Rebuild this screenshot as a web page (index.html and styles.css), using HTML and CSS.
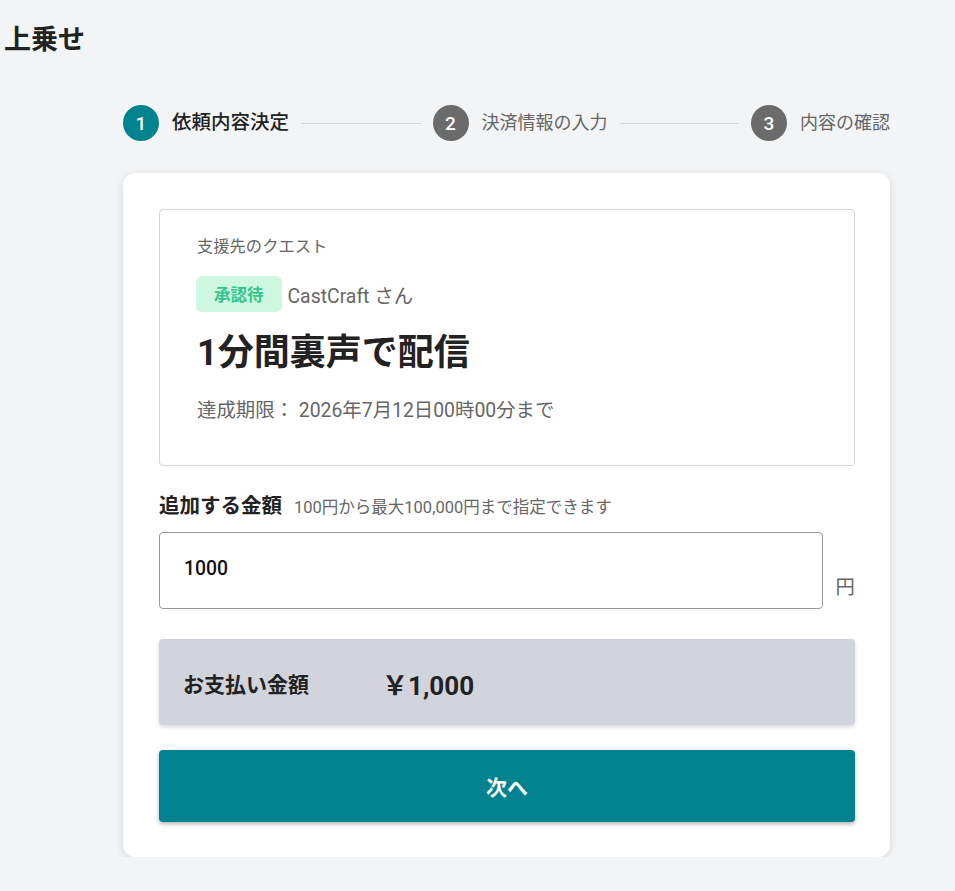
FILE: index.html
```html
<!DOCTYPE html>
<html lang="ja">
<head>
<meta charset="utf-8">
<title>上乗せ</title>
<link rel="stylesheet" href="styles.css">
</head>
<body>
<div class="page">
  <h1 class="page-title">上乗せ</h1>
  <div class="main">
    <ol class="stepper">
      <li class="step step-active"><span class="step-num">1</span><span class="step-label">依頼内容決定</span></li>
      <li class="step-line"></li>
      <li class="step"><span class="step-num">2</span><span class="step-label">決済情報の入力</span></li>
      <li class="step-line"></li>
      <li class="step"><span class="step-num">3</span><span class="step-label">内容の確認</span></li>
    </ol>

    <section class="card">
      <div class="quest">
        <div class="quest-caption">支援先のクエスト</div>
        <div class="quest-meta">
          <span class="badge">承認待</span>
          <span class="quest-owner">CastCraft さん</span>
        </div>
        <h2 class="quest-title">1分間裏声で配信</h2>
        <div class="quest-deadline">達成期限： 2026年7月12日00時00分まで</div>
      </div>

      <div class="amount-label">
        <span class="amount-title">追加する金額</span>
        <span class="amount-hint">100円から最大100,000円まで指定できます</span>
      </div>
      <div class="amount-row">
        <div class="amount-input">1000</div>
        <span class="amount-unit">円</span>
      </div>

      <div class="total">
        <span class="total-label">お支払い金額</span>
        <span class="total-value">￥1,000</span>
      </div>

      <button class="next-btn" type="button">次へ</button>
    </section>
  </div>
</div>
</body>
</html>
```

FILE: styles.css
```css
* { box-sizing: border-box; }

html, body {
  margin: 0;
  padding: 0;
  background: #f3f4f6;
}

body {
  font-family: Roboto, "Noto Sans CJK JP", sans-serif;
  color: #222;
}

.page {
  padding: 24px 0 0 4px;
}

.page-title {
  margin: 0;
  font-size: 27px;
  line-height: 32px;
  font-weight: 700;
  color: #222;
}

.main {
  margin-left: 119px;
  width: 767px;
}

.stepper {
  list-style: none;
  margin: 49px 0 0;
  padding: 0;
  display: flex;
  align-items: center;
}

.step {
  display: flex;
  align-items: center;
  gap: 13px;
}

.step-num {
  width: 36px;
  height: 36px;
  border-radius: 50%;
  background: #6b6b6b;
  color: #fff;
  display: flex;
  align-items: center;
  justify-content: center;
  font-size: 19px;
  font-weight: 500;
  font-family: Roboto, sans-serif;
}

.step-label {
  font-size: 18px;
  color: #666;
  line-height: 24px;
}

.step-active .step-num {
  background: #00838f;
}

.step-active .step-label {
  font-size: 19.5px;
  color: #222;
  font-weight: 500;
}

.step-line {
  flex: 1;
  height: 1px;
  background: #d4d6da;
  margin: 0 12px;
}

.card {
  margin-top: 32px;
  background: #fff;
  border-radius: 12px;
  padding: 36px 35px 35px 36px;
  box-shadow: 0 2px 8px rgba(0, 0, 0, 0.12);
}

.quest {
  border: 1px solid #d4d6da;
  border-radius: 4px;
  padding: 25px 30px 41px 37px;
}

.quest-caption {
  font-size: 16.3px;
  line-height: 24px;
  color: #666;
}

.quest-meta {
  margin-top: 17px;
  display: flex;
  align-items: center;
  gap: 6px;
}

.badge {
  display: inline-flex;
  align-items: center;
  justify-content: center;
  height: 36px;
  padding: 0 18px;
  margin-left: -1px;
  border-radius: 6px;
  background: #cdf7e0;
  color: #34c48c;
  font-weight: 700;
  font-size: 16.5px;
}

.quest-owner {
  font-size: 19.4px;
  color: #666;
}

.quest-title {
  margin: 17px 0 0;
  font-size: 36px;
  line-height: 48px;
  font-weight: 700;
  color: #222;
}

.quest-deadline {
  margin-top: 20px;
  font-size: 19.4px;
  line-height: 27px;
  color: #666;
}

.amount-label {
  margin-top: 25px;
  display: flex;
  align-items: baseline;
  gap: 12px;
  line-height: 30px;
}

.amount-title {
  font-size: 20.5px;
  font-weight: 700;
  color: #222;
}

.amount-hint {
  font-size: 16.5px;
  color: #666;
}

.amount-row {
  margin-top: 9px;
  display: flex;
  align-items: flex-end;
  gap: 13px;
}

.amount-input {
  width: 664px;
  height: 77px;
  border: 1px solid #9a9a9a;
  border-radius: 4px;
  padding: 0 24px 4px;
  display: flex;
  align-items: center;
  font-size: 19.4px;
  font-weight: 500;
  color: #111;
}

.amount-unit {
  font-size: 19.4px;
  color: #666;
  line-height: 24px;
  margin-bottom: 9px;
}

.total {
  margin-top: 30px;
  height: 86px;
  background: #d1d4dc;
  border-radius: 4px;
  box-shadow: 0 2px 4px rgba(0, 0, 0, 0.15);
  display: flex;
  align-items: center;
  padding: 2px 0 0 24px;
}

.total-label {
  width: 199px;
  font-size: 21px;
  font-weight: 700;
  color: #222;
}

.total-value {
  font-size: 26px;
  font-weight: 700;
  color: #222;
}

.next-btn {
  display: flex;
  align-items: center;
  justify-content: center;
  width: 100%;
  margin-top: 25px;
  height: 72px;
  border: none;
  border-radius: 4px;
  background: #00838f;
  box-shadow: 0 2px 4px rgba(0, 0, 0, 0.3);
  color: #fff;
  font-family: Roboto, "Noto Sans CJK JP", sans-serif;
  font-size: 21px;
  font-weight: 700;
  cursor: pointer;
}
```
